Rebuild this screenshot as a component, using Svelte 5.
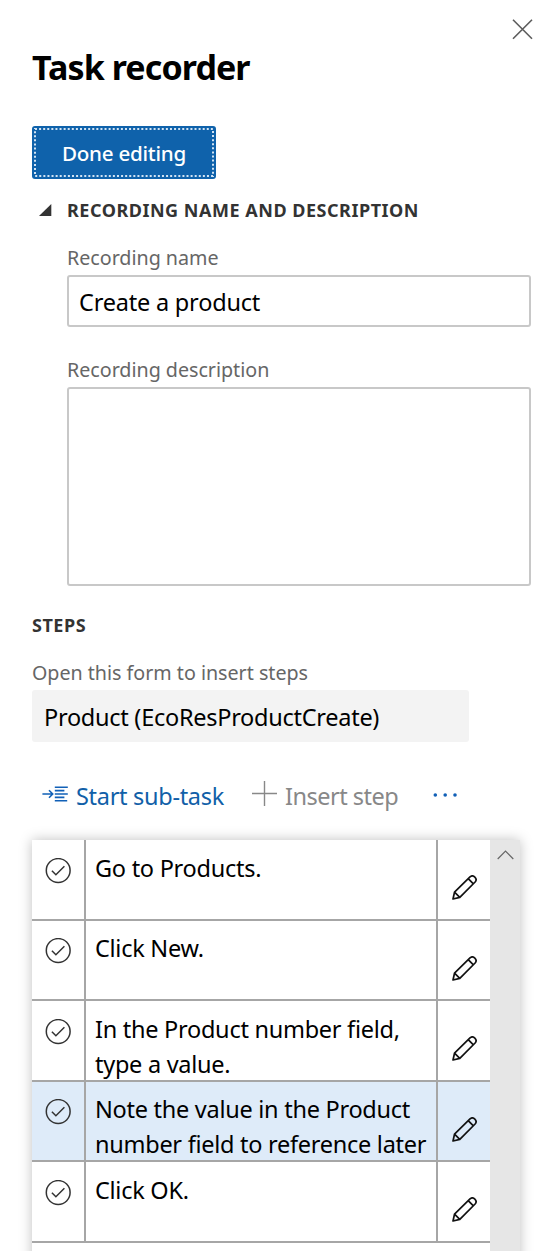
<script>
  const steps = [
    { text: 'Go to Products.' },
    { text: 'Click New.' },
    { text: 'In the Product number field, type a value.' },
    { text: 'Note the value in the Product number field to reference later', selected: true },
    { text: 'Click OK.' }
  ];
</script>

<main>
  <header>
    <h1>Task recorder</h1>
    <button class="close" aria-label="Close">
      <svg width="21" height="21" viewBox="0 0 21 21"><path d="M1 .7 20 19.7M20 .7 1 19.7" fill="none" stroke="#5c5c5c" stroke-width="1.6" /></svg>
    </button>
  </header>

  <button class="done">
    <svg class="focus" width="184" height="53" viewBox="0 0 184 53">
      <rect x="3" y="3" width="178" height="47" />
    </svg>
    <span>Done editing</span>
  </button>

  <section class="details">
    <h2>
      <svg width="13" height="13" viewBox="0 0 13 13"><path d="M12.3 0V12H0Z" fill="#333" /></svg>
      <span>RECORDING NAME AND DESCRIPTION</span>
    </h2>
    <div class="label">Recording name</div>
    <div class="input">Create a product</div>
    <div class="label second">Recording description</div>
    <div class="area"></div>
  </section>

  <h2 class="steps-title">STEPS</h2>
  <div class="label form-label">Open this form to insert steps</div>
  <div class="readonly">Product (EcoResProductCreate)</div>

  <nav>
    <svg class="sub-icon" width="26" height="16" viewBox="0 0 26 16">
      <path d="M.4 8H10.6M7 4.3 10.7 8 7 11.7M12.8 1.2H25.8M12.8 4.6H22.4M12.8 8H25.8M12.8 11.4H22.4M12.8 14.8H25.2" fill="none" stroke="#1160b7" stroke-width="1.6" />
    </svg>
    <span class="sub">Start sub-task</span>
    <svg class="plus" width="25" height="25" viewBox="0 0 25 25"><path d="M12.5 0V25M0 12.5H25" stroke="#888" stroke-width="1.4" /></svg>
    <span class="insert">Insert step</span>
    <svg class="more" width="24" height="4" viewBox="0 0 24 4" fill="#1160b7"><circle cx="2.3" cy="2" r="1.8" /><circle cx="12.2" cy="2" r="1.8" /><circle cx="22" cy="2" r="1.8" /></svg>
  </nav>

  <div class="grid">
    <div class="rows">
      {#each steps as step}
        <div class="row" class:selected={step.selected}>
          <div class="check">
            <svg width="26" height="26" viewBox="0 0 26 26" fill="none" stroke="#333" stroke-width="1.5">
              <circle cx="13.2" cy="12.5" r="11.9" /><path d="M6.9 12.7 10.9 16.8 19.4 8.3" />
            </svg>
          </div>
          <div class="text">{step.text}</div>
          <div class="edit">
            <svg width="25" height="25" viewBox="0 0 25 25" fill="none" stroke="#111" stroke-width="1.7" stroke-linejoin="round">
              <path d="M1 24 2.5 17.2 18 1.9C21.2-1 26 3.6 23.1 7L7.8 22.4ZM16.2 3.6 21.4 8.8M2.5 17.2 7.8 22.4" />
            </svg>
          </div>
        </div>
      {/each}
      <div class="row"><div class="blank"></div></div>
    </div>
    <div class="scroll">
      <svg width="17" height="10" viewBox="0 0 17 10"><path d="M.7 9 8.5 1.2 16.3 9" fill="none" stroke="#666" stroke-width="1.2" /></svg>
    </div>
  </div>
</main>

<style>
  :global(body) { background: #fff; }
  main {
    width: 547px;
    height: 1251px;
    overflow: hidden;
    box-sizing: border-box;
    padding-left: 32px;
    display: flex;
    flex-direction: column;
    align-items: flex-start;
    font-family: 'Noto Sans', 'Open Sans', sans-serif;
    font-size: 23.5px;
    letter-spacing: -0.27px;
    color: #000;
    white-space: nowrap;
  }
  svg { display: block; flex: none; }
  header {
    display: flex;
    justify-content: space-between;
    width: 501px;
    height: 126px;
    flex: none;
  }
  h1 {
    margin: 43px 0 0;
    font-size: 34px;
    line-height: 48px;
    font-weight: 700;
    letter-spacing: -0.9px;
  }
  button { border: 0; padding: 0; background: none; font-family: inherit; }
  .close { height: 21px; margin-top: 19px; }
  .done {
    display: grid;
    place-items: center;
    width: 184px;
    height: 53px;
    flex: none;
    border-radius: 3px;
    background: #0f62ab;
    color: #fff;
    font-size: 20.6px;
    font-weight: 500;
    letter-spacing: -0.25px;
  }
  .done > * { grid-area: 1 / 1; }
  .focus rect { fill: none; stroke: #d3e4f4; stroke-width: 2; stroke-dasharray: 2 2.09; }
  .details { width: 499px; height: 407px; flex: none; }
  h2 {
    margin: 0;
    font-size: 18px;
    line-height: 24px;
    font-weight: 700;
    letter-spacing: 0.52px;
    color: #333;
  }
  .details h2 { display: flex; align-items: center; gap: 15px; padding: 19px 0 0 7px; }
  .label { font-size: 19.7px; line-height: 28px; letter-spacing: -0.02px; color: #666; }
  .details .label { margin: 22px 0 3px 35px; }
  .input, .area {
    box-sizing: border-box;
    margin-left: 35px;
    width: 464px;
    border: 2px solid #c8c8c8;
    border-radius: 3px;
  }
  .input { height: 52px; padding-left: 10px; line-height: 51px; letter-spacing: -0.2px; }
  .details .second { margin-top: 29px; }
  .area { height: 199px; }
  .steps-title { margin-top: 27px; }
  .form-label { margin-top: 22px; }
  .readonly {
    box-sizing: border-box;
    width: 437px;
    height: 52px;
    flex: none;
    margin-top: 3px;
    padding-left: 12px;
    line-height: 54px;
    background: #f3f3f3;
    border-radius: 3px;
  }
  nav { display: flex; align-items: center; height: 98px; flex: none; padding: 10px 0 0 10px; box-sizing: border-box; }
  nav span { line-height: 36px; letter-spacing: -0.3px; }
  .sub { width: 176px; margin-left: 8px; color: #1160a8; }
  .insert { width: 148px; margin-left: 8px; color: #888; letter-spacing: -0.5px; }
  .sub-icon, .plus { margin-bottom: 5px; }
  .more { margin-bottom: 3px; }
  .grid {
    display: flex;
    width: 488px;
    height: 440px;
    flex: none;
    box-shadow: 0 0 12px rgba(0, 0, 0, .25);
  }
  .rows { width: 458px; background: #fff; }
  .row {
    display: grid;
    grid-template-columns: 54px 352px 52px;
    height: 81px;
    box-sizing: border-box;
    border-bottom: 2px solid #a6a6a6;
  }
  .row:nth-child(even) { height: 80px; }
  .row.selected { background: #deebf9; }
  .check, .text { border-right: 2px solid #a6a6a6; }
  .check { padding: 18px 0 0 13px; }
  .row:nth-child(even) .check { padding-top: 17px; }
  .text { white-space: normal; padding: 11px 0 0 9px; line-height: 35px; }
  .row:nth-child(even) .text { padding-top: 10px; }
  .edit { padding: 35px 0 0 14px; }
  .scroll { width: 30px; padding: 10px 0 0 7px; box-sizing: border-box; background: #e6e6e6; }
</style>
